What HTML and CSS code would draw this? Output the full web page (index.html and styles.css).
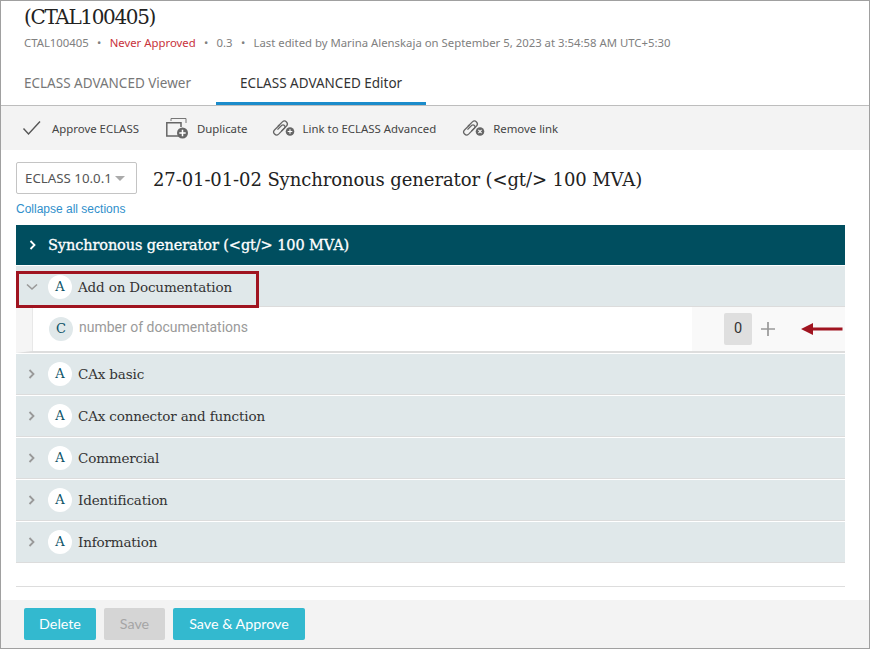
FILE: index.html
```html
<!DOCTYPE html>
<html lang="en">
<head>
<meta charset="utf-8">
<title>ECLASS ADVANCED Editor</title>
<link rel="stylesheet" href="styles.css">
</head>
<body>
<div class="frame">
  <header class="head">
    <h1 class="title">(CTAL100405)</h1>
    <div class="meta">
      <span>CTAL100405</span><span class="dot">•</span><span class="red">Never Approved</span><span class="dot">•</span><span>0.3</span><span class="dot">•</span><span>Last edited by Marina Alenskaja on September 5, 2023 at 3:54:58 AM UTC+5:30</span>
    </div>
    <nav class="tabs">
      <a class="tab">ECLASS ADVANCED Viewer</a>
      <a class="tab active">ECLASS ADVANCED Editor</a>
    </nav>
  </header>
  <div class="toolbar">
    <div class="tool t1">
      <svg width="20" height="16" viewBox="0 0 20 16"><path d="M1.500 8.500 6.500 14 18 1.500" fill="none" stroke="#555" stroke-width="1.400"/></svg>
      <span>Approve ECLASS</span>
    </div>
    <div class="tool t2">
      <svg width="23" height="21" viewBox="0 0 23 21"><path d="M5 3V.5h15V5" fill="none" stroke="#777" stroke-width="1"/><path d="M15 18H.8V4.800H15V9" fill="none" stroke="#666" stroke-width="1.500"/><circle cx="16.500" cy="15" r="5.500" fill="#666"/><path d="M16.500 11.800v6.400M13.300 15h6.400" stroke="#fff" stroke-width="1.500"/></svg>
      <span>Duplicate</span>
    </div>
    <div class="tool t3">
      <svg width="23" height="18" viewBox="0 0 23 18"><g fill="none" stroke="#666" stroke-width="1.300"><path d="M7.500 6 2.500 11a2.900 2.900 0 0 0 4.100 4.100l6-6a2 2 0 0 0-2.800-2.800L5.500 10.600"/><path d="M9.500 12l5-5a2.900 2.900 0 0 0-4.100-4.100l-4.400 4.400"/></g><circle cx="18" cy="12.500" r="4.300" fill="#666"/><path d="M18 10.200v4.600M15.700 12.500h4.600" stroke="#fff" stroke-width="1.100"/></svg>
      <span>Link to ECLASS Advanced</span>
    </div>
    <div class="tool t4">
      <svg width="23" height="18" viewBox="0 0 23 18"><g fill="none" stroke="#666" stroke-width="1.300"><path d="M7.500 6 2.500 11a2.900 2.900 0 0 0 4.100 4.100l6-6a2 2 0 0 0-2.800-2.800L5.500 10.600"/><path d="M9.500 12l5-5a2.900 2.900 0 0 0-4.100-4.100l-4.400 4.400"/></g><circle cx="18" cy="12.500" r="4.300" fill="#666"/><path d="M16.400 10.900l3.200 3.200M19.600 10.900l-3.200 3.200" stroke="#fff" stroke-width="1.100"/></svg>
      <span>Remove link</span>
    </div>
  </div>
  <main class="content">
    <div class="version-row">
      <div class="select">ECLASS 10.0.1<i class="caret"></i></div>
      <h2 class="heading">27-01-01-02 Synchronous generator (&lt;gt/&gt; 100 MVA)</h2>
    </div>
    <a class="collapse">Collapse all sections</a>
    <div class="banner">
      <svg width="8" height="10" viewBox="0 0 8 10"><path d="M1.500 1l4 4-4 4" fill="none" stroke="#fff" stroke-width="1.800"/></svg>
      <span>Synchronous generator (&lt;gt/&gt; 100 MVA)</span>
    </div>
    <div class="row open">
      <svg class="chev-down" width="12" height="8" viewBox="0 0 12 8"><path d="M1 1.500l5 4.500 5-4.500" fill="none" stroke="#999" stroke-width="1.600"/></svg>
      <span class="badge">A</span><span class="label">Add on Documentation</span>
      <div class="callout"></div>
    </div>
    <div class="child">
      <div class="child-main"><span class="badge tinted">C</span><span class="child-label">number of documentations</span></div>
      <div class="child-side">
        <span class="count">0</span>
        <svg width="16" height="16" viewBox="0 0 16 16"><path d="M8 1v14M1 8h14" stroke="#999" stroke-width="1.700"/></svg>
        <svg class="arrow" width="42" height="14" viewBox="0 0 42 14"><path d="M0 7 12 1v4.500h29.500v3H12V13z" fill="#a01420"/></svg>
      </div>
    </div>
    <div class="row"><svg class="chev" width="8" height="10" viewBox="0 0 8 10"><path d="M1.500 1l4 4-4 4" fill="none" stroke="#999" stroke-width="1.800"/></svg><span class="badge">A</span><span class="label">CAx basic</span></div>
    <div class="row"><svg class="chev" width="8" height="10" viewBox="0 0 8 10"><path d="M1.500 1l4 4-4 4" fill="none" stroke="#999" stroke-width="1.800"/></svg><span class="badge">A</span><span class="label">CAx connector and function</span></div>
    <div class="row"><svg class="chev" width="8" height="10" viewBox="0 0 8 10"><path d="M1.500 1l4 4-4 4" fill="none" stroke="#999" stroke-width="1.800"/></svg><span class="badge">A</span><span class="label">Commercial</span></div>
    <div class="row"><svg class="chev" width="8" height="10" viewBox="0 0 8 10"><path d="M1.500 1l4 4-4 4" fill="none" stroke="#999" stroke-width="1.800"/></svg><span class="badge">A</span><span class="label">Identification</span></div>
    <div class="row"><svg class="chev" width="8" height="10" viewBox="0 0 8 10"><path d="M1.500 1l4 4-4 4" fill="none" stroke="#999" stroke-width="1.800"/></svg><span class="badge">A</span><span class="label">Information</span></div>
    <hr class="rule">
  </main>
  <footer class="footer">
    <button class="btn b-del">Delete</button>
    <button class="btn b-save">Save</button>
    <button class="btn b-appr">Save &amp; Approve</button>
  </footer>
</div>
</body>
</html>
```
FILE: styles.css
```css
* { box-sizing: border-box; }
html, body { margin: 0; padding: 0; background: #fff; }
body { width: 870px; height: 649px; overflow: hidden; font-family: "Noto Sans", sans-serif; }
.frame { width: 870px; height: 649px; border: 1px solid #a0a0a0; display: flex; flex-direction: column; overflow: hidden; }
.head { height: 105px; padding: 0 0 0 23px; border-bottom: 1px solid #bdbdbd; display: flex; flex-direction: column; }
.title { margin: 3px 0 0; font: 400 20px/26px "DejaVu Serif", serif; color: #222; letter-spacing: -1.35px; }
.meta { margin-top: 5px; font-size: 11.35px; line-height: 16px; color: #808080; display: flex; white-space: nowrap; }
.dot { margin: 0 8.3px; }
.red { color: #c8333c; }
.tabs { margin-top: 9px; margin-left: -23px; display: flex; height: 46px; }
.tab { font-size: 13.5px; line-height: 34px; color: #777; padding: 6px 20px 0 23px; width: 215px; white-space: nowrap; }
.tab.active { color: #333; width: 210px; padding-left: 24px; border-bottom: 3px solid #1b8ccb; }
.toolbar { height: 44px; background: #f3f3f3; display: flex; align-items: center; padding-left: 21px; }
.tool { display: flex; align-items: center; gap: 8px; font-size: 11.4px; color: #444; white-space: nowrap; }
.t1 { gap: 10px; margin-right: 27px; }
.t2 { margin-right: 24px; }
.t3 { margin-right: 26px; }
.content { flex: 1; padding: 12px 24px 0 15px; display: flex; flex-direction: column; }
.version-row { display: flex; align-items: center; height: 32px; }
.select { width: 121px; height: 32px; border: 1px solid #c4c4c4; border-radius: 2px; font-size: 13.3px; color: #555; padding-left: 8px; display: flex; align-items: center; white-space: nowrap; }
.caret { margin-left: 3px; width: 0; height: 0; border-left: 5px solid transparent; border-right: 5px solid transparent; border-top: 5px solid #aaa; }
.heading { margin: 3px 0 0 16px; font: 400 18px/26px "DejaVu Serif", serif; color: #222; letter-spacing: -0.1px; white-space: nowrap; }
.collapse { margin-top: 7px; height: 16px; font-size: 12px; line-height: 16px; color: #2f8fcb; font-family: "Liberation Sans", sans-serif; }
.banner { margin-top: 8px; height: 40px; background: #004e5f; color: #fff; display: flex; align-items: center; padding-left: 13px; gap: 11px; font: 400 14.5px/20px "DejaVu Serif", serif; letter-spacing: -0.1px; -webkit-text-stroke: 0.3px #fff; white-space: nowrap; }
.row { position: relative; height: 41px; margin-top: 1px; background: #e0e8ea; display: flex; align-items: center; padding-left: 12px; border-bottom: 1px solid #dcdcdc; }
.row.open { padding-top: 2px; }
.chev { margin-right: 12px; flex: none; }
.chev-down { margin: 0 10px 0 -2px; flex: none; }
.badge { width: 24px; height: 24px; border-radius: 50%; background: #fff; color: #0b5266; font: 400 13px/24px "DejaVu Serif", serif; text-align: center; flex: none; }
.badge.tinted { background: #e0e8ea; }
.label { margin-left: 6px; font: 400 13.5px/20px "DejaVu Serif", serif; letter-spacing: -0.16px; color: #333; white-space: nowrap; }
.callout { position: absolute; left: 0; top: 5px; width: 243px; height: 37px; border: 3px solid #a01420; }
.child { height: 46px; display: flex; border-bottom: 2px solid #ddd; border-left: 16px solid #f5f5f5; }
.child-main { flex: 1; display: flex; align-items: center; padding-left: 16px; border-left: 1px solid #e8e8e8; }
.child-label { margin: 0 0 4px 6px; font-family: Roboto, sans-serif; font-size: 14px; color: #9a9a9a; white-space: nowrap; }
.child-side { width: 153px; background: #f9f9f9; display: flex; align-items: center; padding-left: 32px; position: relative; }
.count { width: 28px; height: 32px; background: #dfdfdf; border-radius: 2px; font-family: Roboto, sans-serif; font-size: 14.5px; line-height: 32px; text-align: center; color: #333; margin-right: 8px; }
.arrow { position: absolute; left: 109px; top: 15px; }
.rule { margin: 23px 0 0; border: 0; border-top: 1px solid #ddd; }
.footer { height: 48px; background: #f3f3f3; display: flex; align-items: flex-start; padding: 8px 0 0 23px; gap: 8px; }
.btn { height: 32px; border: 0; border-radius: 2px; font-family: Lato, sans-serif; font-size: 14.3px; color: #fff; padding: 0 0 1px; }
.b-del { width: 72px; background: #33b9cf; }
.b-save { width: 61px; background: #d5d5d5; color: #a5a5a5; }
.b-appr { width: 132px; background: #33b9cf; }
```
